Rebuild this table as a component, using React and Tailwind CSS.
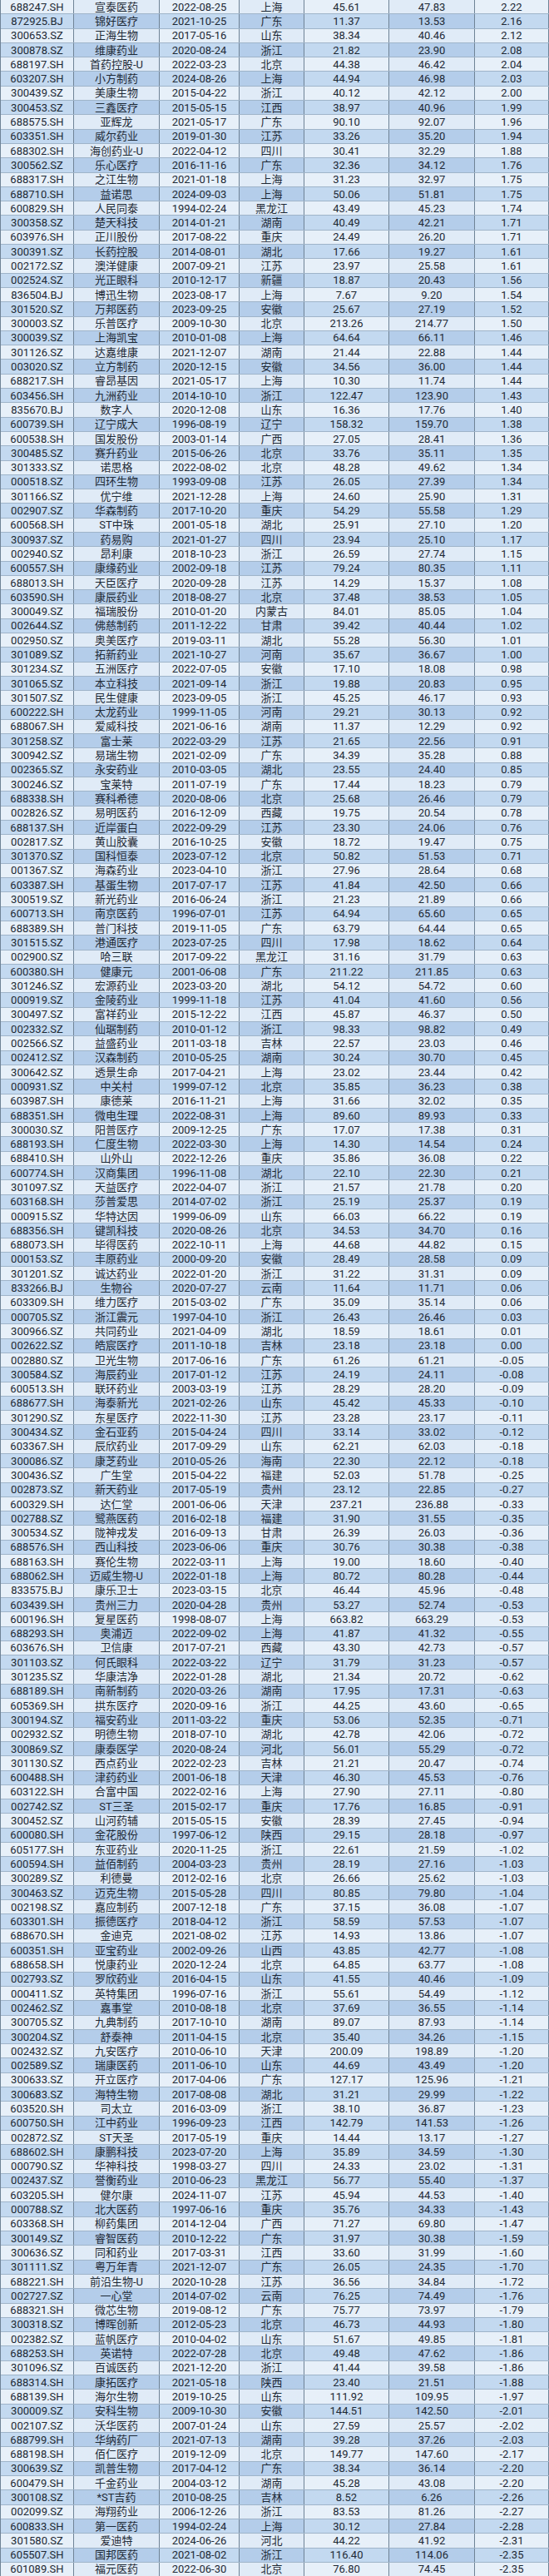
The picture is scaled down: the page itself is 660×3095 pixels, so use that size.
const raw = `688247.SH|宣泰医药|2022-08-25|上海|45.61|47.83|2.22
872925.BJ|锦好医疗|2021-10-25|广东|11.37|13.53|2.16
300653.SZ|正海生物|2017-05-16|山东|38.34|40.46|2.12
300878.SZ|维康药业|2020-08-24|浙江|21.82|23.90|2.08
688197.SH|首药控股-U|2022-03-23|北京|44.38|46.42|2.04
603207.SH|小方制药|2024-08-26|上海|44.94|46.98|2.03
300439.SZ|美康生物|2015-04-22|浙江|40.12|42.12|2.00
300453.SZ|三鑫医疗|2015-05-15|江西|38.97|40.96|1.99
688575.SH|亚辉龙|2021-05-17|广东|90.10|92.07|1.96
603351.SH|威尔药业|2019-01-30|江苏|33.26|35.20|1.94
688302.SH|海创药业-U|2022-04-12|四川|30.41|32.29|1.88
300562.SZ|乐心医疗|2016-11-16|广东|32.36|34.12|1.76
688317.SH|之江生物|2021-01-18|上海|31.23|32.97|1.75
688710.SH|益诺思|2024-09-03|上海|50.06|51.81|1.75
600829.SH|人民同泰|1994-02-24|黑龙江|43.49|45.23|1.74
300358.SZ|楚天科技|2014-01-21|湖南|40.49|42.21|1.71
603976.SH|正川股份|2017-08-22|重庆|24.49|26.20|1.71
300391.SZ|长药控股|2014-08-01|湖北|17.66|19.27|1.61
002172.SZ|澳洋健康|2007-09-21|江苏|23.97|25.58|1.61
002524.SZ|光正眼科|2010-12-17|新疆|18.87|20.43|1.56
836504.BJ|博迅生物|2023-08-17|上海|7.67|9.20|1.54
301520.SZ|万邦医药|2023-09-25|安徽|25.67|27.19|1.52
300003.SZ|乐普医疗|2009-10-30|北京|213.26|214.77|1.50
300039.SZ|上海凯宝|2010-01-08|上海|64.64|66.11|1.46
301126.SZ|达嘉维康|2021-12-07|湖南|21.44|22.88|1.44
003020.SZ|立方制药|2020-12-15|安徽|34.56|36.00|1.44
688217.SH|睿昂基因|2021-05-17|上海|10.30|11.74|1.44
603456.SH|九洲药业|2014-10-10|浙江|122.47|123.90|1.43
835670.BJ|数字人|2020-12-08|山东|16.36|17.76|1.40
600739.SH|辽宁成大|1996-08-19|辽宁|158.32|159.70|1.38
600538.SH|国发股份|2003-01-14|广西|27.05|28.41|1.36
300485.SZ|赛升药业|2015-06-26|北京|33.76|35.11|1.35
301333.SZ|诺思格|2022-08-02|北京|48.28|49.62|1.34
000518.SZ|四环生物|1993-09-08|江苏|26.05|27.39|1.34
301166.SZ|优宁维|2021-12-28|上海|24.60|25.90|1.31
002907.SZ|华森制药|2017-10-20|重庆|54.29|55.58|1.29
600568.SH|ST中珠|2001-05-18|湖北|25.91|27.10|1.20
300937.SZ|药易购|2021-01-27|四川|23.94|25.10|1.17
002940.SZ|昂利康|2018-10-23|浙江|26.59|27.74|1.15
600557.SH|康缘药业|2002-09-18|江苏|79.24|80.35|1.11
688013.SH|天臣医疗|2020-09-28|江苏|14.29|15.37|1.08
603590.SH|康辰药业|2018-08-27|北京|37.48|38.53|1.05
300049.SZ|福瑞股份|2010-01-20|内蒙古|84.01|85.05|1.04
002644.SZ|佛慈制药|2011-12-22|甘肃|39.42|40.44|1.02
002950.SZ|奥美医疗|2019-03-11|湖北|55.28|56.30|1.01
301089.SZ|拓新药业|2021-10-27|河南|35.67|36.67|1.00
301234.SZ|五洲医疗|2022-07-05|安徽|17.10|18.08|0.98
301065.SZ|本立科技|2021-09-14|浙江|19.88|20.83|0.95
301507.SZ|民生健康|2023-09-05|浙江|45.25|46.17|0.93
600222.SH|太龙药业|1999-11-05|河南|29.21|30.13|0.92
688067.SH|爱威科技|2021-06-16|湖南|11.37|12.29|0.92
301258.SZ|富士莱|2022-03-29|江苏|21.65|22.56|0.91
300942.SZ|易瑞生物|2021-02-09|广东|34.39|35.28|0.88
002365.SZ|永安药业|2010-03-05|湖北|23.55|24.40|0.85
300246.SZ|宝莱特|2011-07-19|广东|17.44|18.23|0.79
688338.SH|赛科希德|2020-08-06|北京|25.68|26.46|0.79
002826.SZ|易明医药|2016-12-09|西藏|19.75|20.54|0.78
688137.SH|近岸蛋白|2022-09-29|江苏|23.30|24.06|0.76
002817.SZ|黄山胶囊|2016-10-25|安徽|18.72|19.47|0.75
301370.SZ|国科恒泰|2023-07-12|北京|50.82|51.53|0.71
001367.SZ|海森药业|2023-04-10|浙江|27.96|28.64|0.68
603387.SH|基蛋生物|2017-07-17|江苏|41.84|42.50|0.66
300519.SZ|新光药业|2016-06-24|浙江|21.23|21.89|0.66
600713.SH|南京医药|1996-07-01|江苏|64.94|65.60|0.65
688389.SH|普门科技|2019-11-05|广东|63.79|64.44|0.65
301515.SZ|港通医疗|2023-07-25|四川|17.98|18.62|0.64
002900.SZ|哈三联|2017-09-22|黑龙江|31.16|31.79|0.63
600380.SH|健康元|2001-06-08|广东|211.22|211.85|0.63
301246.SZ|宏源药业|2023-03-20|湖北|54.12|54.72|0.60
000919.SZ|金陵药业|1999-11-18|江苏|41.04|41.60|0.56
300497.SZ|富祥药业|2015-12-22|江西|45.87|46.37|0.50
002332.SZ|仙琚制药|2010-01-12|浙江|98.33|98.82|0.49
002566.SZ|益盛药业|2011-03-18|吉林|22.57|23.03|0.46
002412.SZ|汉森制药|2010-05-25|湖南|30.24|30.70|0.45
300642.SZ|透景生命|2017-04-21|上海|23.02|23.44|0.42
000931.SZ|中关村|1999-07-12|北京|35.85|36.23|0.38
603987.SH|康德莱|2016-11-21|上海|31.66|32.02|0.35
688351.SH|微电生理|2022-08-31|上海|89.60|89.93|0.33
300030.SZ|阳普医疗|2009-12-25|广东|17.07|17.38|0.31
688193.SH|仁度生物|2022-03-30|上海|14.30|14.54|0.24
688410.SH|山外山|2022-12-26|重庆|35.86|36.08|0.22
600774.SH|汉商集团|1996-11-08|湖北|22.10|22.30|0.21
301097.SZ|天益医疗|2022-04-07|浙江|21.57|21.78|0.20
603168.SH|莎普爱思|2014-07-02|浙江|25.19|25.37|0.19
000915.SZ|华特达因|1999-06-09|山东|66.03|66.22|0.19
688356.SH|键凯科技|2020-08-26|北京|34.53|34.70|0.16
688073.SH|毕得医药|2022-10-11|上海|44.68|44.82|0.15
000153.SZ|丰原药业|2000-09-20|安徽|28.49|28.58|0.09
301201.SZ|诚达药业|2022-01-20|浙江|31.22|31.31|0.09
833266.BJ|生物谷|2020-07-27|云南|11.64|11.71|0.06
603309.SH|维力医疗|2015-03-02|广东|35.09|35.14|0.06
000705.SZ|浙江震元|1997-04-10|浙江|26.43|26.46|0.03
300966.SZ|共同药业|2021-04-09|湖北|18.59|18.61|0.01
002622.SZ|皓宸医疗|2011-10-18|吉林|23.18|23.18|0.00
002880.SZ|卫光生物|2017-06-16|广东|61.26|61.21|-0.05
300584.SZ|海辰药业|2017-01-12|江苏|24.19|24.11|-0.08
600513.SH|联环药业|2003-03-19|江苏|28.29|28.20|-0.09
688677.SH|海泰新光|2021-02-26|山东|45.42|45.33|-0.10
301290.SZ|东星医疗|2022-11-30|江苏|23.28|23.17|-0.11
300434.SZ|金石亚药|2015-04-24|四川|33.14|33.02|-0.12
603367.SH|辰欣药业|2017-09-29|山东|62.21|62.03|-0.18
300086.SZ|康芝药业|2010-05-26|海南|22.30|22.12|-0.18
300436.SZ|广生堂|2015-04-22|福建|52.03|51.78|-0.25
002873.SZ|新天药业|2017-05-19|贵州|23.12|22.85|-0.27
600329.SH|达仁堂|2001-06-06|天津|237.21|236.88|-0.33
002788.SZ|鹭燕医药|2016-02-18|福建|31.90|31.55|-0.35
300534.SZ|陇神戎发|2016-09-13|甘肃|26.39|26.03|-0.36
688576.SH|西山科技|2023-06-06|重庆|30.76|30.38|-0.38
688163.SH|赛伦生物|2022-03-11|上海|19.00|18.60|-0.40
688062.SH|迈威生物-U|2022-01-18|上海|80.72|80.28|-0.44
833575.BJ|康乐卫士|2023-03-15|北京|46.44|45.96|-0.48
603439.SH|贵州三力|2020-04-28|贵州|53.27|52.74|-0.53
600196.SH|复星医药|1998-08-07|上海|663.82|663.29|-0.53
688293.SH|奥浦迈|2022-09-02|上海|41.87|41.32|-0.55
603676.SH|卫信康|2017-07-21|西藏|43.30|42.73|-0.57
301103.SZ|何氏眼科|2022-03-22|辽宁|31.79|31.23|-0.57
301235.SZ|华康洁净|2022-01-28|湖北|21.34|20.72|-0.62
688189.SH|南新制药|2020-03-26|湖南|17.95|17.31|-0.63
605369.SH|拱东医疗|2020-09-16|浙江|44.25|43.60|-0.65
300194.SZ|福安药业|2011-03-22|重庆|53.06|52.35|-0.71
002932.SZ|明德生物|2018-07-10|湖北|42.78|42.06|-0.72
300869.SZ|康泰医学|2020-08-24|河北|56.01|55.29|-0.72
301130.SZ|西点药业|2022-02-23|吉林|21.21|20.47|-0.74
600488.SH|津药药业|2001-06-18|天津|46.30|45.53|-0.76
603122.SH|合富中国|2022-02-16|上海|27.90|27.11|-0.80
002742.SZ|ST三圣|2015-02-17|重庆|17.76|16.85|-0.91
300452.SZ|山河药辅|2015-05-15|安徽|28.39|27.45|-0.94
600080.SH|金花股份|1997-06-12|陕西|29.15|28.18|-0.97
605177.SH|东亚药业|2020-11-25|浙江|22.61|21.59|-1.02
600594.SH|益佰制药|2004-03-23|贵州|28.19|27.16|-1.03
300289.SZ|利德曼|2012-02-16|北京|26.66|25.62|-1.03
300463.SZ|迈克生物|2015-05-28|四川|80.85|79.80|-1.04
002198.SZ|嘉应制药|2007-12-18|广东|37.15|36.08|-1.07
603301.SH|振德医疗|2018-04-12|浙江|58.59|57.53|-1.07
688670.SH|金迪克|2021-08-02|江苏|14.93|13.86|-1.07
600351.SH|亚宝药业|2002-09-26|山西|43.85|42.77|-1.08
688658.SH|悦康药业|2020-12-24|北京|64.85|63.77|-1.08
002793.SZ|罗欣药业|2016-04-15|山东|41.55|40.46|-1.09
000411.SZ|英特集团|1996-07-16|浙江|55.61|54.49|-1.12
002462.SZ|嘉事堂|2010-08-18|北京|37.69|36.55|-1.14
300705.SZ|九典制药|2017-10-10|湖南|89.07|87.93|-1.14
300204.SZ|舒泰神|2011-04-15|北京|35.40|34.26|-1.15
002432.SZ|九安医疗|2010-06-10|天津|200.09|198.89|-1.20
002589.SZ|瑞康医药|2011-06-10|山东|44.69|43.49|-1.20
300633.SZ|开立医疗|2017-04-06|广东|127.17|125.96|-1.21
300683.SZ|海特生物|2017-08-08|湖北|31.21|29.99|-1.22
603520.SH|司太立|2016-03-09|浙江|38.10|36.87|-1.23
600750.SH|江中药业|1996-09-23|江西|142.79|141.53|-1.26
002872.SZ|ST天圣|2017-05-19|重庆|14.44|13.17|-1.27
688602.SH|康鹏科技|2023-07-20|上海|35.89|34.59|-1.30
000790.SZ|华神科技|1998-03-27|四川|24.33|23.02|-1.31
002437.SZ|誉衡药业|2010-06-23|黑龙江|56.77|55.40|-1.37
603205.SH|健尔康|2024-11-07|江苏|45.94|44.53|-1.40
000788.SZ|北大医药|1997-06-16|重庆|35.76|34.33|-1.43
603368.SH|柳药集团|2014-12-04|广西|71.27|69.80|-1.47
300149.SZ|睿智医药|2010-12-22|广东|31.97|30.38|-1.59
300636.SZ|同和药业|2017-03-31|江西|33.60|31.99|-1.60
301111.SZ|粤万年青|2021-12-07|广东|26.05|24.35|-1.70
688221.SH|前沿生物-U|2020-10-28|江苏|36.56|34.84|-1.72
002727.SZ|一心堂|2014-07-02|云南|76.25|74.49|-1.76
688321.SH|微芯生物|2019-08-12|广东|75.77|73.97|-1.79
300318.SZ|博晖创新|2012-05-23|北京|46.73|44.93|-1.80
002382.SZ|蓝帆医疗|2010-04-02|山东|51.67|49.85|-1.81
688253.SH|英诺特|2022-07-28|北京|49.48|47.62|-1.86
301096.SZ|百诚医药|2021-12-20|浙江|41.44|39.58|-1.86
688314.SH|康拓医疗|2021-05-18|陕西|23.40|21.51|-1.88
688139.SH|海尔生物|2019-10-25|山东|111.92|109.95|-1.97
300009.SZ|安科生物|2009-10-30|安徽|144.51|142.50|-2.01
002107.SZ|沃华医药|2007-01-24|山东|27.59|25.57|-2.02
688799.SH|华纳药厂|2021-07-13|湖南|39.28|37.26|-2.03
688198.SH|佰仁医疗|2019-12-09|北京|149.77|147.60|-2.17
300639.SZ|凯普生物|2017-04-12|广东|38.34|36.14|-2.20
600479.SH|千金药业|2004-03-12|湖南|45.28|43.08|-2.20
300108.SZ|*ST吉药|2010-08-25|吉林|8.52|6.26|-2.26
002099.SZ|海翔药业|2006-12-26|浙江|83.53|81.26|-2.27
600833.SH|第一医药|1994-02-24|上海|30.12|27.84|-2.28
301580.SZ|爱迪特|2024-06-26|河北|44.22|41.92|-2.31
605507.SH|国邦医药|2021-08-02|浙江|116.40|114.06|-2.35
601089.SH|福元医药|2022-06-30|北京|76.80|74.45|-2.35`;

const rows = raw.split('\n').map((line) => line.split('|'));

// striped rows; in the blue rows the 2nd/4th/6th columns are a shade darker
const cellBg = (row, col) => {
  if (row % 2 === 0) return col % 2 === 1 ? 'bg-[#e0ebf7]' : 'bg-[#e7f0f9]';
  return col % 2 === 1 ? 'bg-[#b4cdea]' : 'bg-[#c3d9f0]';
};

const App = () => {
  return (
    <div
      className="w-[660px] h-[3095px] flex flex-col bg-[#e6eff8] text-[#1d2935] text-[13px] leading-none border-l border-[#6f8396]"
      style={{ fontFamily: 'Roboto, "Noto Sans CJK SC", sans-serif' }}
    >
      {rows.map((r, i) => (
        <div
          key={r[0]}
          className="flex-1 min-h-0 grid grid-cols-[88px_103px_96px_78px_102px_103px_1fr] border-b border-[#9fb4c9]"
        >
          {r.map((cell, j) => (
            <div
              key={j}
              className={
                'flex items-center justify-center border-r border-[#6f8396] whitespace-nowrap ' +
                cellBg(i, j)
              }
            >
              {cell}
            </div>
          ))}
        </div>
      ))}
    </div>
  );
};

export default App;
